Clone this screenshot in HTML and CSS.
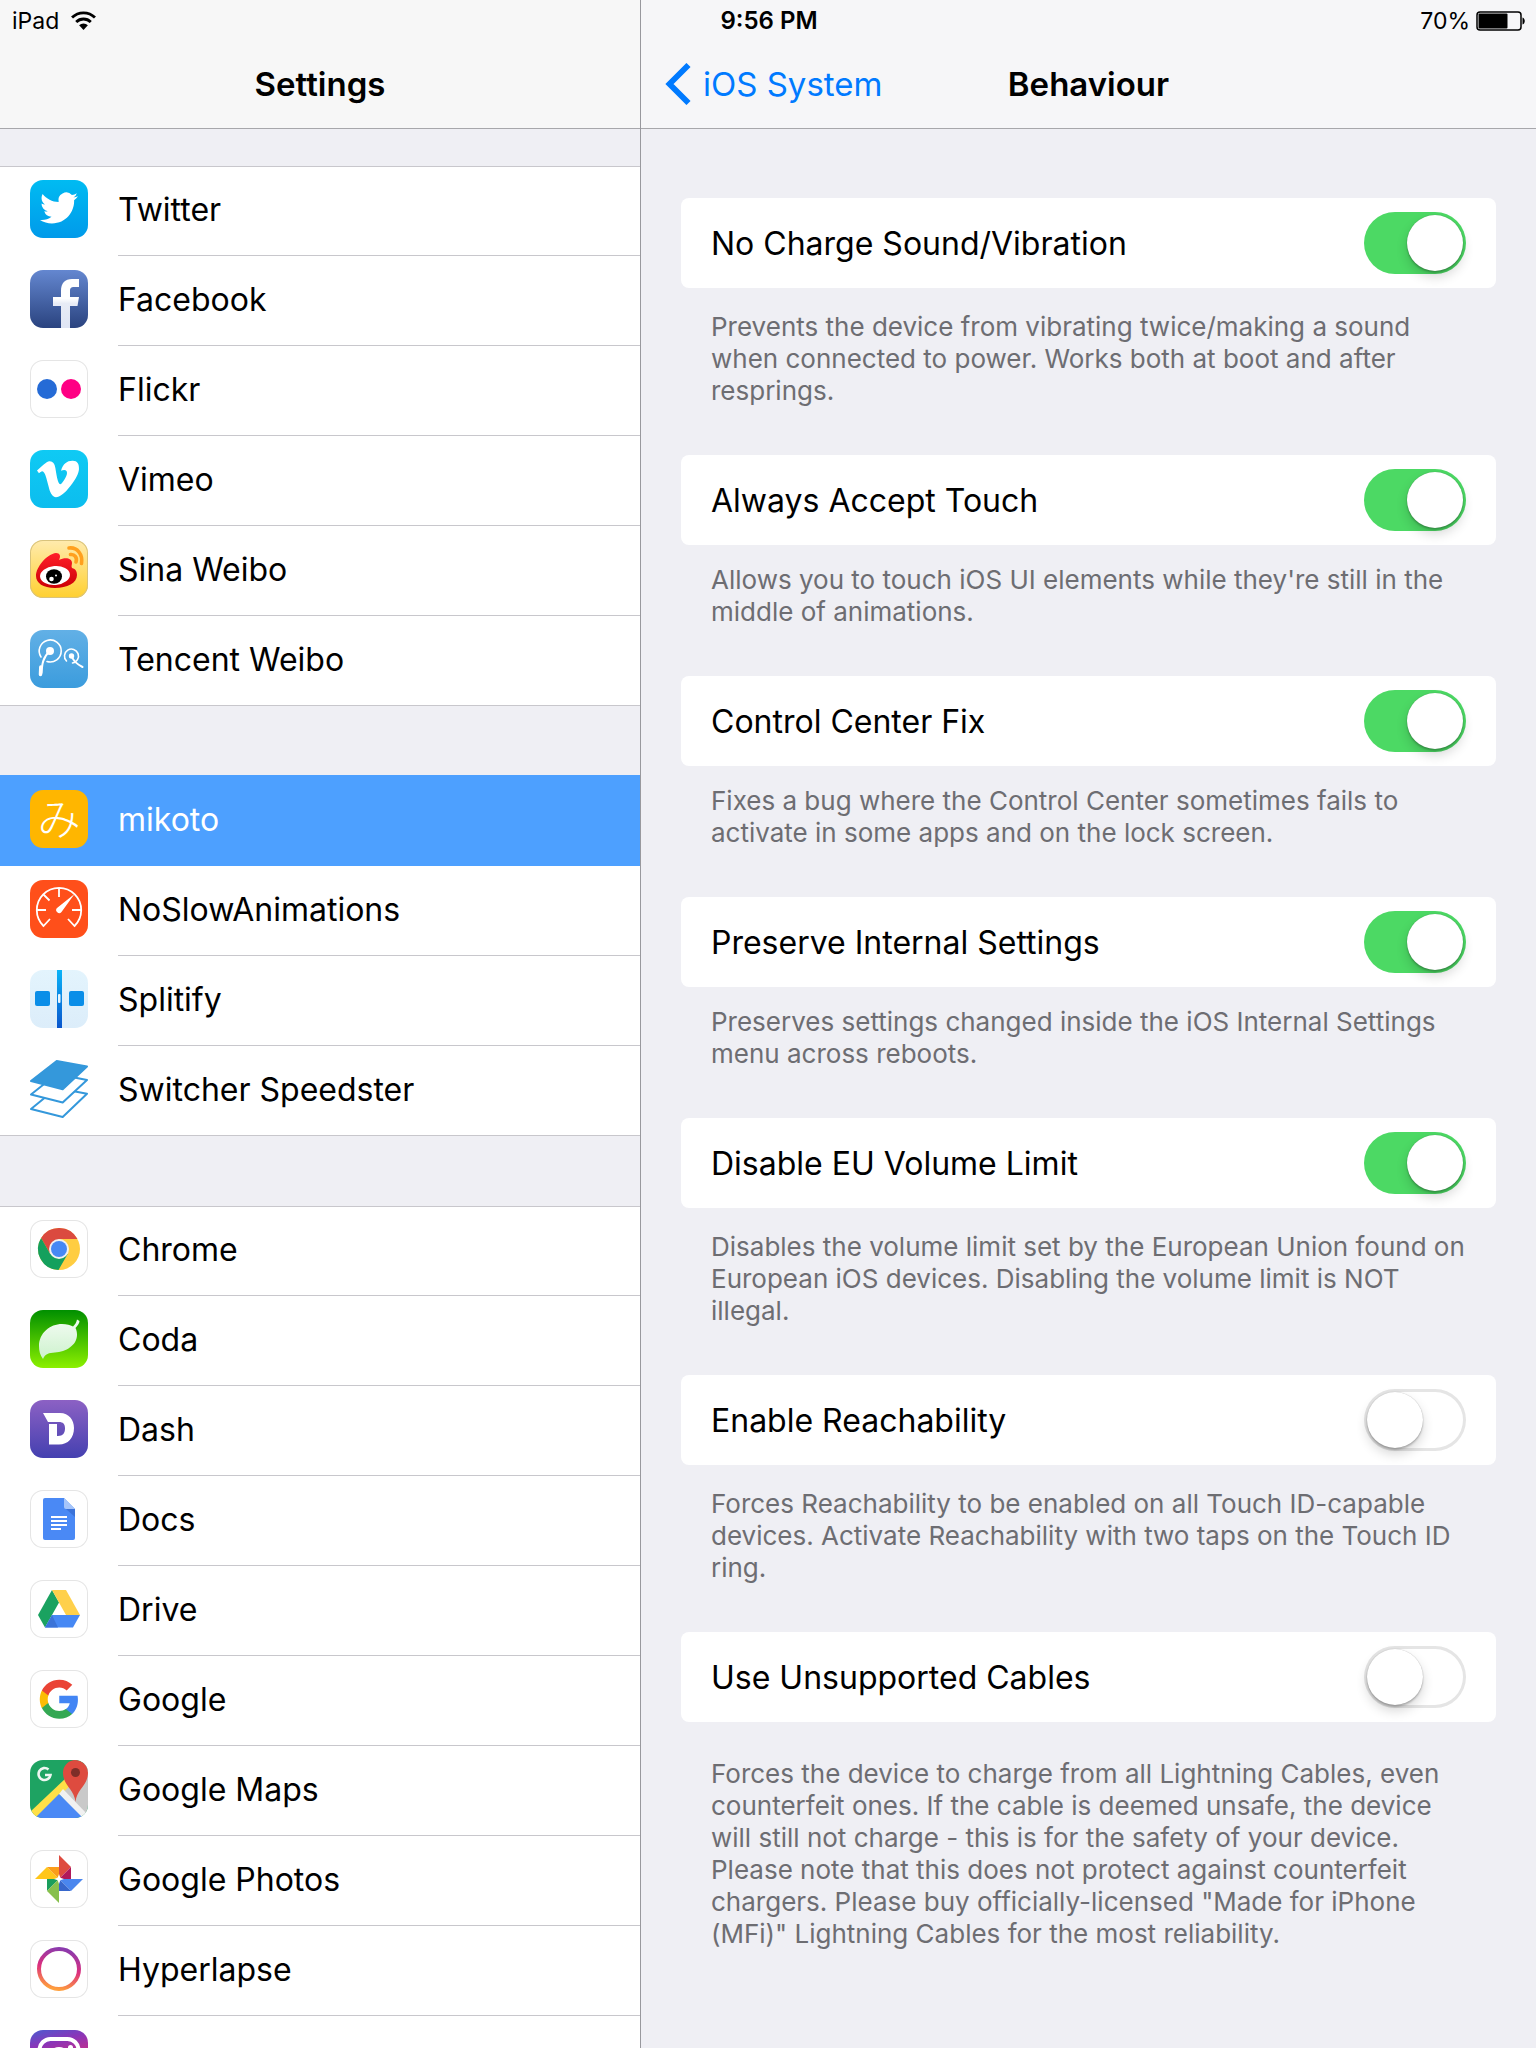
FILE: index.html
```
<!doctype html>
<html lang="en">
<head>
	<meta charset="UTF-8">
	<title>Settings</title>
	<meta name="viewport" content="width=device-width, initial-scale=1.0">
	<link rel="stylesheet" href="styles.css">
</head>
<body>
	<div class="app">
		<div class="status">
			<div class="carrier">
				<span>iPad</span>
				<svg class="wifi" viewBox="0 0 24 18">
					<path d="M1 6.200a15.500 15.500 0 0 1 22 0M5 10.500a9.800 9.800 0 0 1 14 0" fill="none" stroke="#000" stroke-width="2.700"/>
					<path d="M12 18l-4.200-4.400a6 6 0 0 1 8.400 0z"/>
				</svg>
			</div>
			<b class="time">9:56 PM</b>
			<div class="power">
				<span>70%</span>
				<svg class="battery" viewBox="0 0 50 20">
					<rect x="1" y="1" width="44" height="18" rx="3" fill="none" stroke="#000" stroke-width="1.500"/>
					<rect x="2.500" y="2.500" width="29" height="15" rx="1"/>
					<path d="M46.500 6.500c3 1 3 6 0 7z"/>
				</svg>
			</div>
		</div>

		<nav class="sidebar">
			<div class="bar">
				<h1 class="title">Settings</h1>
			</div>
			<ul class="group">
				<li><a class="row" href="#">
					<svg class="icon twitter" viewBox="0 0 58 58"><path transform="translate(10 9) scale(1.583)" fill="#fff" d="M23.953 4.570a10 10 0 01-2.825.775 4.958 4.958 0 002.163-2.723c-.951.555-2.005.959-3.127 1.184a4.920 4.920 0 00-8.384 4.482C7.690 8.095 4.067 6.130 1.640 3.162a4.822 4.822 0 00-.666 2.475c0 1.710.870 3.213 2.188 4.096a4.904 4.904 0 01-2.228-.616v.060a4.923 4.923 0 003.946 4.827 4.996 4.996 0 01-2.212.085 4.936 4.936 0 004.604 3.417 9.867 9.867 0 01-6.102 2.105c-.390 0-.779-.023-1.170-.067a13.995 13.995 0 007.557 2.209c9.053 0 13.998-7.496 13.998-13.985 0-.210 0-.420-.015-.630A9.935 9.935 0 0024 4.590z"/></svg>
					<span class="label">Twitter</span>
				</a></li>
				<li><a class="row" href="#">
					<svg class="icon facebook" viewBox="0 0 58 58">
						<linearGradient id="fb" x2="0" y2="1"><stop offset=".4" stop-color="#fff"/><stop offset=".5" stop-color="#e8ecf6"/><stop offset="1" stop-color="#dfe5f4"/></linearGradient>
						<path fill="url(#fb)" d="M31 58V36h-8v-9h8v-6c0-8 4-12 11-12h7v8h-5c-3 0-4 1-4 4v6h9l-1.500 9H40v22z"/>
					</svg>
					<span class="label">Facebook</span>
				</a></li>
				<li><a class="row" href="#">
					<svg class="icon white" viewBox="0 0 58 58"><circle cx="17" cy="29" r="10" fill="#256bd6"/><circle cx="41" cy="29" r="10" fill="#ff0084"/></svg>
					<span class="label">Flickr</span>
				</a></li>
				<li><a class="row" href="#">
					<svg class="icon vimeo" viewBox="0 0 58 58"><path transform="translate(7 8) scale(1.750)" fill="#fff" d="M23.977 6.417c-.105 2.338-1.739 5.543-4.894 9.609-3.268 4.247-6.026 6.370-8.290 6.370-1.409 0-2.578-1.294-3.553-3.881l-1.918-7.114c-.719-2.584-1.488-3.878-2.312-3.878-.179 0-.806.378-1.881 1.132l-1.129-1.457a315 315 0 003.501-3.128c1.579-1.368 2.765-2.085 3.554-2.159 1.867-.180 3.016 1.100 3.447 3.838.465 2.953.789 4.789.971 5.507.539 2.450 1.131 3.674 1.776 3.674.502 0 1.256-.796 2.265-2.385 1.004-1.589 1.540-2.797 1.612-3.628.144-1.371-.395-2.061-1.614-2.061-.574 0-1.167.121-1.777.391 1.186-3.868 3.434-5.757 6.762-5.637 2.473.060 3.628 1.664 3.493 4.797z"/></svg>
					<span class="label">Vimeo</span>
				</a></li>
				<li><a class="row" href="#">
					<svg class="icon weibo" viewBox="0 0 58 58">
						<linearGradient id="wb" x2="0" y2="1"><stop stop-color="#ff1f2a"/><stop offset="1" stop-color="#cc0006"/></linearGradient>
						<path fill="url(#wb)" d="M6 36c0-9 11-22 20-23 4 0 5 3 3 7 6-3 13-2 13 3 0 2-1 3 0 5 4 1 5 4 5 7 0 8-10 13-22 13S6 43 6 36z"/>
						<ellipse cx="25" cy="35.500" rx="15" ry="9.500" fill="#fff" transform="rotate(-5 25 35.500)"/>
						<ellipse cx="24" cy="36.500" rx="8" ry="7.300"/>
						<circle cx="21.500" cy="39" r="2.300" fill="#fff"/><circle cx="26" cy="35.500" r="1" fill="#fff"/>
						<path d="M39 8c8-1 14 6 12.500 15.500M40.500 14.500c4-.500 7 3 5.500 7.500" fill="none" stroke="#ffa01e" stroke-width="3.600" stroke-linecap="round"/>
					</svg>
					<span class="label">Sina Weibo</span>
				</a></li>
				<li><a class="row" href="#">
					<svg class="icon tencent" viewBox="0 0 58 58">
						<g fill="none" stroke="#fff" stroke-linecap="round">
							<path stroke-width="1.600" d="M11 27a11 11 0 1 1 6 4.500M36.500 31a7 7 0 1 1 6 2"/>
							<path stroke-width="2" d="M20 21c-7 6-8 13-8.500 22M41.500 26c2 5 5 8 11 11"/>
							<path stroke-width="3.500" d="M10.800 37l-.300 7.500"/>
						</g>
						<circle cx="20" cy="21" r="4" fill="#fff"/><circle cx="41.500" cy="26" r="2.700" fill="#fff"/>
					</svg>
					<span class="label">Tencent Weibo</span>
				</a></li>
			</ul>

			<ul class="group">
				<li><a class="row selected" href="#">
					<svg class="icon mikoto" viewBox="0 0 58 58"><text x="29" y="45" text-anchor="middle" class="kana">み</text></svg>
					<span class="label">mikoto</span>
				</a></li>
				<li><a class="row" href="#">
					<svg class="icon noslow" viewBox="0 0 58 58">
						<path fill="none" stroke="#fff" stroke-width="1.800" d="M20 39l-6.500 7A22.200 22.200 0 1 1 44.500 46L38 39M29 8v9M7 30h9M51 30h-9M13.500 14.500l6 6"/>
						<path d="M44.500 14L31.500 32a3 3 0 0 1-4.500-4z" fill="#fff"/>
					</svg>
					<span class="label">NoSlowAnimations</span>
				</a></li>
				<li><a class="row" href="#">
					<svg class="icon splitify" viewBox="0 0 58 58">
						<linearGradient id="sp" x2="0" y2="1"><stop stop-color="#0ab4f8"/><stop offset="1" stop-color="#0a55cc"/></linearGradient>
						<rect x="27" width="5" height="58" fill="url(#sp)"/>
						<rect x="28" y="24" width="2.500" height="9" rx="1" fill="#e8f5fd"/>
						<rect x="5" y="21" width="15" height="15" rx="2" fill="#0a8ee8"/><rect x="39" y="21" width="15" height="15" rx="2" fill="#0a8ee8"/>
					</svg>
					<span class="label">Splitify</span>
				</a></li>
				<li><a class="row" href="#">
					<svg class="icon plain" viewBox="0 0 58 58">
						<g fill="#fff" stroke="#3498db" stroke-width="2" stroke-linejoin="round">
							<path d="M26.700 28L57 33.800 32.700 57 1 49z"/>
							<path d="M26.700 14L57 20 32.700 42.500 1 34.500z"/>
							<path fill="#3498db" d="M26.700 1L57 6.500 32.700 29.200 1 21z"/>
						</g>
					</svg>
					<span class="label">Switcher Speedster</span>
				</a></li>
			</ul>

			<ul class="group">
				<li><a class="row" href="#">
					<svg class="icon white" viewBox="0 0 58 58">
						<circle cx="29" cy="29" r="21" fill="#ffcd41"/>
						<path fill="#db4a3f" d="M29 19h18.500A21 21 0 0 0 11.100 18l9.200 16z"/>
						<path fill="#14a05d" d="M11.100 18a21 21 0 0 0 17.400 32l9.200-16H20.300z"/>
						<circle cx="29" cy="29" r="10" fill="#f1f1f1"/><circle cx="29" cy="29" r="8" fill="#4688f4"/>
					</svg>
					<span class="label">Chrome</span>
				</a></li>
				<li><a class="row" href="#">
					<svg class="icon coda" viewBox="0 0 58 58">
						<linearGradient id="cd" x2="0" y2="1"><stop stop-color="#f2fbf2"/><stop offset="1" stop-color="#cdf2cd"/></linearGradient>
						<path fill="url(#cd)" d="M13 49c-3-4-4-8-4-13C9 23 20 14 32 14c5 0 8 1 11 2.500 2-2 3.500-4 4-7l2.500 1.500c0 2-2 5-4 7 1 2 1.500 4 1.500 7 0 10-11 17-22 17.500-6 .500-10 1-12 6.500z"/>
					</svg>
					<span class="label">Coda</span>
				</a></li>
				<li><a class="row" href="#">
					<svg class="icon dash" viewBox="0 0 58 58"><path fill="#fff" d="M13 13h17c9 0 14 7 14 15 0 10-6 16.500-15 16.500H19V24h8v12h1c5 0 7-3 7-7.500S33 22 29 22H18z"/></svg>
					<span class="label">Dash</span>
				</a></li>
				<li><a class="row" href="#">
					<svg class="icon white" viewBox="0 0 58 58">
						<path fill="#4a89f5" d="M15 8h19l11 11v29a2 2 0 0 1-2 2H15a2 2 0 0 1-2-2V10a2 2 0 0 1 2-2z"/>
						<path fill="#3b73d9" d="M36 19h9v8z"/>
						<path fill="#a6c5fa" d="M34 8l11 11H36a2 2 0 0 1-2-2z"/>
						<path stroke="#fff" stroke-width="2" d="M21 27h16M21 31h16M21 35h16M21 39h10"/>
					</svg>
					<span class="label">Docs</span>
				</a></li>
				<li><a class="row" href="#">
					<svg class="icon white" viewBox="0 0 58 58">
						<path fill="#1aa260" d="M22 10l7 12.500-14 25L8 35z"/>
						<path fill="#ffd04b" d="M22 10h14l14 25H36z"/>
						<path fill="#4688f4" d="M22 35h28l-7 12.500H15z"/>
						<path fill="#3a73d8" d="M22 35l6 12.500H15z"/>
					</svg>
					<span class="label">Drive</span>
				</a></li>
				<li><a class="row" href="#">
					<svg class="icon white" viewBox="0 0 58 58"><g transform="translate(8 8) scale(1.770)">
						<path fill="#4285f4" d="M22.560 12.250c0-.780-.070-1.530-.200-2.250H12v4.260h5.920c-.260 1.370-1.040 2.530-2.210 3.310v2.770h3.570c2.080-1.920 3.280-4.740 3.280-8.090z"/>
						<path fill="#34a853" d="M12 23c2.970 0 5.460-.980 7.280-2.660l-3.570-2.770c-.980.660-2.230 1.060-3.710 1.060-2.860 0-5.290-1.930-6.160-4.530H2.180v2.840C3.990 20.530 7.700 23 12 23z"/>
						<path fill="#fbbc05" d="M5.840 14.090c-.220-.660-.350-1.360-.350-2.090s.130-1.430.350-2.090V7.070H2.180C1.430 8.550 1 10.220 1 12s.430 3.450 1.180 4.930l2.850-2.220.810-.620z"/>
						<path fill="#ea4335" d="M12 5.380c1.620 0 3.060.560 4.210 1.640l3.150-3.150C17.450 2.090 14.970 1 12 1 7.700 1 3.990 3.470 2.180 7.070l3.660 2.840c.870-2.600 3.300-4.530 6.160-4.530z"/>
					</g></svg>
					<span class="label">Google</span>
				</a></li>
				<li><a class="row" href="#">
					<svg class="icon maps" viewBox="0 0 58 58">
						<path fill="#c9c9c9" d="M29 28L58 0v58z"/>
						<path fill="#ffe047" d="M0 58v-6L36 18l6 6L6 58z"/>
						<path fill="#f1f1f1" d="M29 34l4-5 25 26v3h-7z"/>
						<path fill="#4a89f5" d="M5 58l24-24 24 24z"/>
						<path fill="#de4b3f" d="M45.500 42c-1-13-12.500-16-12.500-29.500a12.500 12.500 0 0 1 25 0C58 26 46.500 29 45.500 42z"/>
						<circle cx="45.500" cy="12.500" r="4.500" fill="#7e2e28"/>
						<path fill="none" stroke="#eef6f1" stroke-width="2.600" d="M18.500 9.500a6 6 0 1 0 2 5.500h-5.500"/>
					</svg>
					<span class="label">Google Maps</span>
				</a></li>
				<li><a class="row" href="#">
					<svg class="icon white" viewBox="0 0 58 58">
						<path fill="#de4b3f" d="M29 5l12 12-12 12z"/><path fill="#b0185a" d="M41 17v12H29z"/>
						<path fill="#ffc61a" d="M5 29l12-12 12 12z"/><path fill="#fb9d1a" d="M17 17h12v12z"/>
						<path fill="#1a9e5c" d="M17 29h12L17 41z"/><path fill="#87c04d" d="M17 41l12-12v24z"/>
						<path fill="#4a86ee" d="M29 29h24L41 41z"/><path fill="#3767cc" d="M29 29l12 12H29z"/>
						<path fill="#fff" d="M29 24l1.300 3.700L34 29l-3.700 1.300L29 34l-1.300-3.700L24 29l3.700-1.300z"/>
					</svg>
					<span class="label">Google Photos</span>
				</a></li>
				<li><a class="row" href="#">
					<svg class="icon white" viewBox="0 0 58 58">
						<linearGradient id="hl" x1=".6" y1="0" x2=".4" y2="1"><stop stop-color="#8b3aad"/><stop offset=".5" stop-color="#dc2f7e"/><stop offset="1" stop-color="#ff9f3c"/></linearGradient>
						<circle cx="29" cy="29" r="20" fill="none" stroke="url(#hl)" stroke-width="4"/>
					</svg>
					<span class="label">Hyperlapse</span>
				</a></li>
				<li><a class="row" href="#" aria-label="Instagram">
					<svg class="icon instagram" viewBox="0 0 58 58">
						<rect x="9.500" y="9" width="39" height="39" rx="11" fill="none" stroke="#fff" stroke-width="4"/>
						<circle cx="29" cy="28" r="9" fill="none" stroke="#fff" stroke-width="4"/><circle cx="40.500" cy="17.500" r="2.500" fill="#fff"/>
					</svg>
					<span class="label"></span>
				</a></li>
			</ul>
		</nav>

		<main class="detail">
			<div class="bar">
				<a class="back" href="#">
					<svg class="chevron" viewBox="0 0 26 42"><path d="M23.500 2L4.500 21l19 19" fill="none" stroke="#007aff" stroke-width="5.800"/></svg>
					<span>iOS System</span>
				</a>
				<h2 class="title">Behaviour</h2>
			</div>
			<div class="cells">
				<label class="cell"><span>No Charge Sound/Vibration</span><input class="switch" type="checkbox" checked></label>
				<p class="note">Prevents the device from vibrating twice/making a sound when connected to power. Works both at boot and after resprings.</p>

				<label class="cell"><span>Always Accept Touch</span><input class="switch" type="checkbox" checked></label>
				<p class="note short">Allows you to touch iOS UI elements while they're still in the middle of animations.</p>

				<label class="cell"><span>Control Center Fix</span><input class="switch" type="checkbox" checked></label>
				<p class="note short">Fixes a bug where the Control Center sometimes fails to activate in some apps and on the lock screen.</p>

				<label class="cell"><span>Preserve Internal Settings</span><input class="switch" type="checkbox" checked></label>
				<p class="note short">Preserves settings changed inside the iOS Internal Settings menu across reboots.</p>

				<label class="cell"><span>Disable EU Volume Limit</span><input class="switch" type="checkbox" checked></label>
				<p class="note">Disables the volume limit set by the European Union found on European iOS devices. Disabling the volume limit is NOT illegal.</p>

				<label class="cell"><span>Enable Reachability</span><input class="switch" type="checkbox"></label>
				<p class="note">Forces Reachability to be enabled on all Touch ID-capable devices. Activate Reachability with two taps on the Touch ID ring.</p>

				<label class="cell"><span>Use Unsupported Cables</span><input class="switch" type="checkbox"></label>
				<p class="note long">Forces the device to charge from all Lightning Cables, even counterfeit ones. If the cable is deemed unsafe, the device will still not charge - this is for the safety of your device. Please note that this does not protect against counterfeit chargers. Please buy officially-licensed "Made for iPhone (MFi)" Lightning Cables for the most reliability.</p>
			</div>
		</main>
	</div>
</body>
</html>
```

FILE: styles.css
```
*{
	box-sizing:border-box;
}
body,ul,li,h1,h2,p{
	margin:0;
	padding:0;
	list-style:none;
}
body{
	font-family:Inter,"Liberation Sans",sans-serif;
	font-size:32px;
	color:#000;
	background:#efeff4;
}
a{
	color:inherit;
	text-decoration:none;
}
.app{
	display:grid;
	grid-template-columns:5fr 7fr;
	grid-template-rows:41px 1fr;
	height:100vh;
	overflow:hidden;
}

/* status bar lies over the top of both panes */
.status{
	grid-area:1 / 1 / 2 / 3;
	z-index:1;
	display:grid;
	grid-template-columns:1fr auto 1fr;
	align-items:center;
	padding:0 10px 0 12px;
	font-size:23px;
}
.carrier,.power{
	display:flex;
	align-items:center;
}
.carrier{
	gap:12px;
}
.power{
	justify-content:flex-end;
	gap:6px;
}
.time{
	font-size:24px;
	font-weight:600;
}
.wifi{
	width:25px;
	height:19px;
}
.battery{
	width:50px;
	height:20px;
}

.sidebar,.detail{
	grid-row:1 / 3;
	min-width:0;
	min-height:0;
	overflow:hidden;
}
.sidebar{
	grid-column:1;
}
.detail{
	grid-column:2;
	border-left:1px solid #98989d;
}
.bar{
	display:grid;
	grid-template-columns:1fr auto 1fr;
	align-items:center;
	height:129px;
	padding:40px 24px 0;
	background:#f7f7f7;
	border-bottom:1px solid #a7a7ab;
}
.detail .bar{
	background:#f6f6f8;
}
.title{
	grid-column:2;
	font-size:33px;
	font-weight:600;
}
.back{
	display:flex;
	align-items:center;
	gap:12px;
	font-size:33px;
	color:#007aff;
}
.chevron{
	width:26px;
	height:42px;
}

.group{
	margin-bottom:70px;
	background:#fff;
	box-shadow:inset 0 1px #c8c7cc;
}
.sidebar .bar + .group{
	margin-top:37px;
}
.row{
	display:flex;
	height:90px;
	padding-left:30px;
	gap:30px;
}
.icon{
	flex:none;
	width:58px;
	height:58px;
	margin-top:14px;
	border-radius:13px;
}
.label{
	flex:1;
	line-height:88px;
	border-bottom:1px solid #c8c7cc;
}
li:last-child .row{
	box-shadow:inset 0 -1px #c8c7cc;
}
.row.selected{
	color:#fff;
	background:#4da0ff;
	box-shadow:0 -1px #4da0ff;
}
.selected .label{
	border-color:#4da0ff;
}

.white{
	background:#fff;
	box-shadow:inset 0 0 0 1px #e5e5e5;
}
.plain{
	border-radius:0;
}
.twitter{
	background:linear-gradient(#00bbf2,#009aea);
}
.facebook{
	background:linear-gradient(#6487d0,#2a437f);
}
.vimeo{
	background:linear-gradient(#0fcaf4,#0cbdee);
}
.weibo{
	background:linear-gradient(#ffebae,#ffd030);
	box-shadow:inset 0 0 0 1px #d9c37c;
}
.tencent{
	background:linear-gradient(#62b0e6,#3b9cdd);
}
.mikoto{
	background:#ffb600;
	overflow:visible;
}
.kana{
	font-family:"Noto Sans CJK JP",sans-serif;
	font-size:43px;
	font-weight:300;
	fill:#fff;
}
.noslow{
	background:#ff4f1a;
}
.splitify{
	background:linear-gradient(#e3f4fd,#dcedfa);
}
.coda{
	background:linear-gradient(#008f00,#8cf000);
}
.dash{
	background:linear-gradient(#8c61c4,#4440b0);
}
.maps{
	background:#1ea362;
}
.instagram{
	background:linear-gradient(165deg,#4a5bd0,#8a35b8 25%,#d92d7a 60%,#fdb04a);
}

.cells{
	padding:69px 40px 0;
}
.cell{
	display:flex;
	align-items:center;
	justify-content:space-between;
	height:90px;
	padding:0 30px;
	background:#fff;
	border-radius:8px;
}
.note{
	padding:23px 24px 48px 30px;
	font-size:26px;
	line-height:32px;
	color:#6d6d72;
}
.note.short{
	padding-top:19px;
}
.note.long{
	padding-top:36px;
}
.switch{
	appearance:none;
	flex:none;
	width:102px;
	height:62px;
	margin:0;
	padding:3px;
	border-radius:31px;
	background:#fff;
	box-shadow:inset 0 0 0 3px #e5e5e5;
}
.switch::before{
	content:"";
	display:block;
	width:56px;
	height:56px;
	border-radius:50%;
	background:#fff;
	box-shadow:0 6px 12px rgba(0,0,0,.16),0 2px 2px rgba(0,0,0,.2),0 0 1px rgba(0,0,0,.3);
}
.switch:checked{
	background:#4cd964;
	box-shadow:none;
}
.switch:checked::before{
	margin-left:auto;
}
```
